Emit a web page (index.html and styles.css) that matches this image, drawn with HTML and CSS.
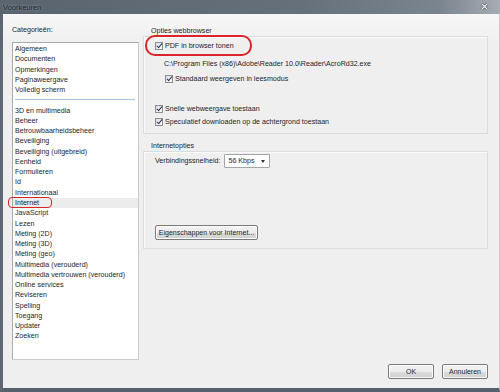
FILE: index.html
```html
<!DOCTYPE html>
<html lang="nl">
  <head>
    <meta charset="UTF-8" />
    <title>Voorkeuren</title>
    <link rel="stylesheet" href="styles.css">
  </head>
  <body>
    <div class="window">
      <div class="titlebar">
        <span class="title">Voorkeuren</span>
        <svg class="close" width="9" height="7" viewBox="0 0 9 7">
          <path d="M1.5 0.5 L7.5 6.5 M7.5 0.5 L1.5 6.5" stroke="#3a4048" stroke-width="2.4" />
          <path d="M1.5 0.5 L7.5 6.5 M7.5 0.5 L1.5 6.5" stroke="#f4f6f8" stroke-width="1.2" />
        </svg>
      </div>

      <div class="frame">
        <div class="content">
          <div class="sidebar">
            <div class="cat-label">Categorieën:</div>
            <ul class="list">
              <li>Algemeen</li>
              <li>Documenten</li>
              <li>Opmerkingen</li>
              <li>Paginaweergave</li>
              <li>Volledig scherm</li>
              <li class="sep"></li>
              <li>3D en multimedia</li>
              <li>Beheer</li>
              <li>Betrouwbaarheidsbeheer</li>
              <li>Beveiliging</li>
              <li>Beveiliging (uitgebreid)</li>
              <li>Eenheid</li>
              <li>Formulieren</li>
              <li>Id</li>
              <li>Internationaal</li>
              <li class="selected"><span class="mark-small">Internet</span></li>
              <li>JavaScript</li>
              <li>Lezen</li>
              <li>Meting (2D)</li>
              <li>Meting (3D)</li>
              <li>Meting (geo)</li>
              <li>Multimedia (verouderd)</li>
              <li>Multimedia vertrouwen (verouderd)</li>
              <li>Online services</li>
              <li>Reviseren</li>
              <li>Spelling</li>
              <li>Toegang</li>
              <li>Updater</li>
              <li>Zoeken</li>
            </ul>
          </div>

          <div class="panel">
            <div class="group-title">Opties webbrowser</div>
            <div class="group group-web">
              <label class="check mark-big"><span class="box"></span>PDF in browser tonen</label>
              <div class="path">C:\Program Files (x86)\Adobe\Reader 10.0\Reader\AcroRd32.exe</div>
              <label class="check indent"><span class="box"></span>Standaard weergeven in leesmodus</label>
              <label class="check spaced"><span class="box"></span>Snelle webweergave toestaan</label>
              <label class="check tight"><span class="box"></span>Speculatief downloaden op de achtergrond toestaan</label>
            </div>

            <div class="group-title second">Internetopties</div>
            <div class="group group-net">
              <div class="speed-row">
                <span>Verbindingssnelheid:</span>
                <div class="select">
                  <span>56 Kbps</span>
                  <span class="arrow"></span>
                </div>
              </div>
              <button class="btn btn-wide">Eigenschappen voor Internet...</button>
            </div>
          </div>
        </div>

        <div class="footer">
          <button class="btn">OK</button>
          <button class="btn">Annuleren</button>
        </div>
      </div>
    </div>
  </body>
</html>
```

FILE: styles.css
```css
body {
  margin: 0;
  font-family: "Liberation Sans", Arial, sans-serif;
  font-size: 7.1px;
  color: #1e1e1e;
  background: #f0f0f0;
}

.window {
  width: 500px;
  height: 392px;
  display: flex;
  flex-direction: column;
  overflow: hidden;
}

.titlebar {
  height: 14px;
  flex: none;
  display: flex;
  align-items: center;
  justify-content: space-between;
  padding: 0 11px 0 3px;
  background: linear-gradient(to right, #59646f 0%, #65707b 60%, #7b858f 88%, #a6adb4 100%);
}

.title {
  font-size: 7.5px;
  color: #1c2228;
  text-shadow: 0 0 3px rgba(230, 236, 240, 0.55);
}

.close {
  display: block;
  margin-top: -2px;
}

.frame {
  flex: 1;
  display: flex;
  flex-direction: column;
  border-left: 3px solid #5c6772;
  border-bottom: 4px solid #56616c;
  border-right: 1px solid #c9cdd1;
  background: linear-gradient(#f7f7f7, #efefef 30px);
}

.content {
  display: flex;
  gap: 4px;
  padding: 0 11px 0 9px;
}

.sidebar {
  width: 127px;
  padding-top: 11px;
}

.cat-label {
  line-height: 10px;
}

.list {
  list-style: none;
  margin: 7px 0 0;
  padding: 1px 0 0;
  height: 315px;
  background: #fff;
  border: 1px solid #a8acb0;
  border-right-color: #c8ccd0;
  border-bottom-color: #c8ccd0;
}

.list li {
  line-height: 10.27px;
  height: 10.27px;
  padding-left: 2px;
  white-space: nowrap;
}

.list li.sep {
  position: relative;
}

.list li.sep::after {
  content: "";
  position: absolute;
  left: 2px;
  right: 3px;
  top: 4px;
  border-top: 1px solid #a9c4e0;
}

.list li.selected {
  background: #ececec;
}

.mark-small {
  position: relative;
}

.mark-small::after {
  content: "";
  position: absolute;
  left: -7px;
  right: -13px;
  top: -2px;
  bottom: -1px;
  border: 1.5px solid #d8242a;
  border-radius: 4px;
}

.panel {
  flex: 1;
}

.group-title {
  line-height: 10px;
  margin-top: 12px;
  padding-left: 8px;
}

.group-title.second {
  margin-top: 7px;
}

.group {
  border: 1px solid #dcdcdc;
  box-shadow: inset 1px 1px 0 #fafafa;
  padding: 3px 9px 6px 11px;
}

.group-web {
  height: 87px;
}

.group-net {
  height: 88px;
  padding-top: 2px;
}

.check {
  display: flex;
  align-items: center;
  gap: 2px;
  height: 10px;
  white-space: nowrap;
}

.box {
  width: 6px;
  height: 6px;
  border: 1px solid #8e8f8f;
  background: linear-gradient(135deg, #dcdcdc, #fbfbfb);
  position: relative;
  flex: none;
}

.box::after {
  content: "";
  position: absolute;
  left: 2px;
  top: -1px;
  width: 2px;
  height: 5px;
  border-right: 1.2px solid #2a3a66;
  border-bottom: 1.2px solid #2a3a66;
  transform: rotate(40deg);
}

.mark-big {
  position: relative;
  width: max-content;
  margin-top: 1px;
}

.mark-big::after {
  content: "";
  position: absolute;
  left: -10px;
  right: -18px;
  top: -6px;
  bottom: -5px;
  border: 2px solid #d8242a;
  border-radius: 10px;
}

.path {
  line-height: 10px;
  margin: 8px 0 0 9px;
  white-space: nowrap;
}

.indent {
  margin: 5px 0 0 10px;
}

.spaced {
  margin-top: 20px;
}

.tight {
  margin-top: 3px;
}

.speed-row {
  display: flex;
  align-items: center;
  gap: 4px;
}

.select {
  width: 46px;
  height: 14px;
  display: flex;
  align-items: center;
  justify-content: space-between;
  padding-left: 3px;
  box-sizing: border-box;
  background: #fff;
  border: 1px solid #a2a6aa;
  border-radius: 1px;
}

.arrow {
  width: 11px;
  height: 11px;
  position: relative;
}

.arrow::after {
  content: "";
  position: absolute;
  left: 3px;
  top: 4px;
  border-left: 2.5px solid transparent;
  border-right: 2.5px solid transparent;
  border-top: 3px solid #333;
}

.btn {
  font-family: inherit;
  font-size: 7px;
  color: #1e1e1e;
  height: 15px;
  width: 46px;
  padding: 0;
  background: linear-gradient(#f4f4f4 0%, #ebebeb 50%, #dddddd 51%, #cfcfcf 100%);
  border: 1px solid #7a7a7a;
  border-radius: 2px;
  box-shadow: inset 0 0 0 1px #fbfbfb;
}

.btn-wide {
  display: block;
  width: 103px;
  margin-top: 57px;
}

.footer {
  margin-top: auto;
  display: flex;
  justify-content: flex-end;
  gap: 8px;
  padding: 0 11px 9px 0;
}
```
